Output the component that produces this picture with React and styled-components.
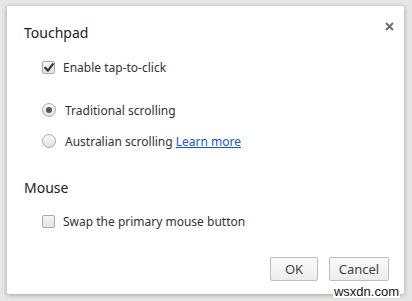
import styled, { createGlobalStyle } from "styled-components";

const GlobalStyle = createGlobalStyle`
  html, body {
    margin: 0;
    padding: 0;
    background: #e6e6e6;
  }
  body {
    font-family: "Noto Sans", "Open Sans", sans-serif;
    color: #333;
  }
`;

const Page = styled.div`
  width: 412px;
  height: 301px;
  padding: 6px 8px 7px 7px;
  box-sizing: border-box;
  position: relative;
  overflow: hidden;
`;

const Dialog = styled.div`
  position: relative;
  height: 100%;
  background: #fff;
  border-radius: 2px;
  box-shadow: 0 1px 5px rgba(0, 0, 0, 0.3);
  padding: 17px 15px 13px 17px;
  box-sizing: border-box;
  display: flex;
  flex-direction: column;
`;

const Close = styled.button`
  position: absolute;
  top: 13px;
  right: 8px;
  width: 14px;
  height: 14px;
  padding: 0;
  border: 0;
  background: none;
  display: flex;
  align-items: center;
  justify-content: center;
`;

const Title = styled.h2`
  margin: ${(p) => p.$top || 0}px 0 0;
  font-size: 14px;
  font-weight: 400;
  line-height: 20px;
  color: #222;
`;

const Option = styled.label`
  display: flex;
  align-items: center;
  height: 20px;
  margin: ${(p) => p.$top || 0}px 0 0 18px;
  font-size: 12px;
  color: #333;
  gap: ${(p) => (p.$radio ? 9 : 8)}px;
`;

const Box = styled.span`
  width: 11px;
  height: 11px;
  border: 1px solid #a9a9a9;
  border-radius: 2px;
  background: linear-gradient(#f6f6f6, #e4e4e4);
  display: flex;
  align-items: center;
  justify-content: center;
`;

const Radio = styled.span`
  width: 12px;
  height: 12px;
  border: 1px solid #ababab;
  border-radius: 50%;
  background: linear-gradient(#f8f8f8, #e2e2e2);
  display: flex;
  align-items: center;
  justify-content: center;

  &::after {
    content: "";
    display: ${(p) => (p.$on ? "block" : "none")};
    width: 6px;
    height: 6px;
    border-radius: 50%;
    background: #555;
  }
`;

const Link = styled.a`
  color: #1a55c4;
  text-decoration: underline;
`;

const Footer = styled.div`
  margin-top: auto;
  display: flex;
  justify-content: flex-end;
  gap: 11px;
`;

const Button = styled.button`
  width: ${(p) => p.$w}px;
  height: 24px;
  border: 1px solid #bdbdbd;
  border-radius: 2px;
  background: linear-gradient(#fafafa, #ededed);
  font-family: "Noto Sans", "Open Sans", sans-serif;
  font-size: 13px;
  color: #444;
  padding: 0;
`;

const Watermark = styled.span`
  position: absolute;
  right: 12px;
  bottom: 3px;
  font-family: "Liberation Sans", Arial, sans-serif;
  font-size: 13px;
  color: #111;
  background: #fff;
  line-height: 13px;
  padding: 0 1px;
`;

function Check() {
  return (
    <svg width="10" height="9" viewBox="0 0 10 9">
      <path
        d="M1.2 4.8 L4 7.6 L8.8 1.2"
        fill="none"
        stroke="#333"
        strokeWidth="2.2"
        strokeLinecap="round"
        strokeLinejoin="round"
      />
    </svg>
  );
}

export default function App() {
  return (
    <>
      <GlobalStyle />
      <Page>
        <Dialog>
          <Close aria-label="Close">
            <svg width="9" height="9" viewBox="0 0 9 9">
              <path d="M1 1 L8 8 M8 1 L1 8" stroke="#6f6f6f" strokeWidth="2" />
            </svg>
          </Close>
          <Title>Touchpad</Title>
          <Option $top={14}>
            <Box>
              <Check />
            </Box>
            Enable tap-to-click
          </Option>
          <Option $radio $top={23}>
            <Radio $on />
            Traditional scrolling
          </Option>
          <Option $radio $top={11}>
            <Radio />
            <span>
              Australian scrolling <Link href="#">Learn more</Link>
            </span>
          </Option>
          <Title $top={27}>Mouse</Title>
          <Option $top={13}>
            <Box />
            Swap the primary mouse button
          </Option>
          <Footer>
            <Button $w={48}>OK</Button>
            <Button $w={60}>Cancel</Button>
          </Footer>
        </Dialog>
        <Watermark>wsxdn.com</Watermark>
      </Page>
    </>
  );
}
